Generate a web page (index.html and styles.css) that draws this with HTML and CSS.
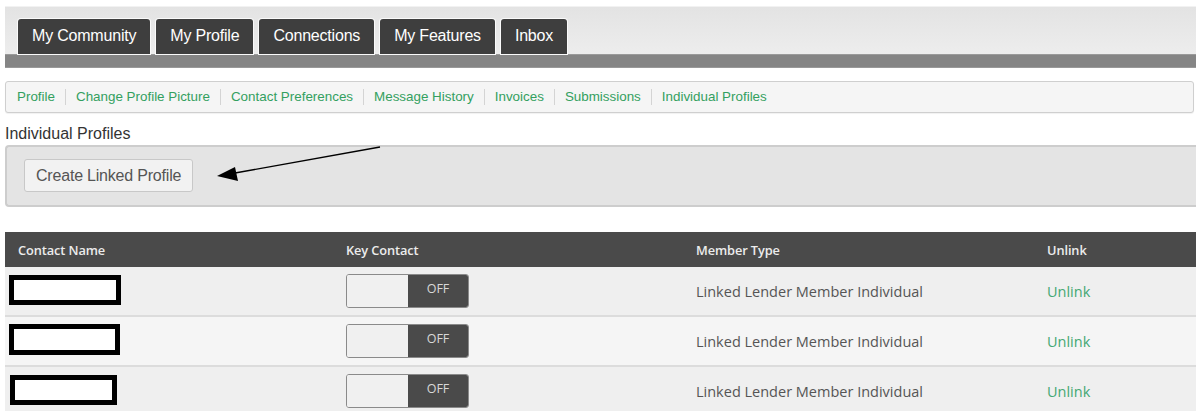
FILE: index.html
```html
<!DOCTYPE html>
<html lang="en">
<head>
<meta charset="utf-8">
<title>Individual Profiles</title>
<link rel="stylesheet" href="styles.css">
</head>
<body>
<div class="page">
  <div class="topnav">
    <ul class="tabs">
      <li class="tab">My Community</li>
      <li class="tab">My Profile</li>
      <li class="tab">Connections</li>
      <li class="tab">My Features</li>
      <li class="tab">Inbox</li>
    </ul>
    <div class="tabbar"></div>
  </div>

  <nav class="subnav">
    <a href="#">Profile</a>
    <a href="#">Change Profile Picture</a>
    <a href="#">Contact Preferences</a>
    <a href="#">Message History</a>
    <a href="#">Invoices</a>
    <a href="#">Submissions</a>
    <a href="#">Individual Profiles</a>
  </nav>

  <h2 class="heading">Individual Profiles</h2>

  <div class="panel">
    <button class="btn">Create Linked Profile</button>
    <svg class="arrow" width="180" height="40" viewBox="0 0 180 40">
      <line x1="165" y1="1" x2="20" y2="27" stroke="#000" stroke-width="1.4"/>
      <polygon points="2,30 20,21 23,35" fill="#000"/>
    </svg>
  </div>

  <div class="table">
    <div class="row head">
      <div class="cell">Contact Name</div>
      <div class="cell">Key Contact</div>
      <div class="cell">Member Type</div>
      <div class="cell">Unlink</div>
    </div>
    <div class="row odd">
      <div class="cell"><span class="redact r1"></span></div>
      <div class="cell"><span class="toggle"><span class="knob"></span><span class="state">OFF</span></span></div>
      <div class="cell">Linked Lender Member Individual</div>
      <div class="cell"><a href="#" class="unlink">Unlink</a></div>
    </div>
    <div class="row even">
      <div class="cell"><span class="redact r2"></span></div>
      <div class="cell"><span class="toggle"><span class="knob"></span><span class="state">OFF</span></span></div>
      <div class="cell">Linked Lender Member Individual</div>
      <div class="cell"><a href="#" class="unlink">Unlink</a></div>
    </div>
    <div class="row odd">
      <div class="cell"><span class="redact r3"></span></div>
      <div class="cell"><span class="toggle"><span class="knob"></span><span class="state">OFF</span></span></div>
      <div class="cell">Linked Lender Member Individual</div>
      <div class="cell"><a href="#" class="unlink">Unlink</a></div>
    </div>
  </div>
</div>
</body>
</html>
```

FILE: styles.css
```css
* { box-sizing: border-box; }

html, body {
  margin: 0;
  background: #fff;
  overflow: hidden;
}

body {
  font-family: "Liberation Sans", Arial, sans-serif;
  color: #333;
}

.page {
  padding: 6px 0 0 5px;
}

/* top navigation */
.topnav {
  background: linear-gradient(#e3e3e3, #f0f0f0);
  border-top: 1px solid #f2f2f2;
  padding-top: 12px;
}

.tabs {
  list-style: none;
  margin: 0;
  padding: 0 0 0 13px;
  display: flex;
  gap: 6px;
}

.tab {
  background: #3e3e3e;
  color: #fff;
  font-size: 16px;
  line-height: 34px;
  height: 35px;
  padding: 0 14px;
  border-radius: 3px 3px 0 0;
  box-shadow: 0 0 0 1px #fafafa;
  letter-spacing: -0.2px;
}

.tabbar {
  height: 14px;
  background: #858585;
  border-top: 1px solid #9a9a9a;
  border-bottom: 1px solid #999;
}

/* sub navigation */
.subnav {
  margin: 13px 2px 0 0;
  height: 32px;
  border: 1px solid #cfcfcf;
  border-radius: 3px;
  background: #f5f5f5;
  box-shadow: 0 1px 1px rgba(0, 0, 0, 0.06);
  display: flex;
  align-items: center;
  padding-left: 11px;
  font-size: 13.4px;
}

.subnav a {
  color: #33a05f;
  text-decoration: none;
  padding: 0 10px;
  border-left: 1px solid #d4d4d4;
  line-height: 16px;
}

.subnav a:first-child {
  border-left: none;
  padding-left: 0;
}

.heading {
  margin: 10px 0 0;
  font-size: 16px;
  font-weight: normal;
  line-height: 22px;
  color: #333;
}

/* action panel */
.panel {
  position: relative;
  height: 62px;
  background: #e4e4e4;
  border: 2px solid #cdcdcd;
  border-right: none;
  border-radius: 4px 0 0 4px;
  padding: 12px 0 0 17px;
}

.btn {
  font-family: "Liberation Sans", Arial, sans-serif;
  font-size: 16px;
  color: #555;
  background: #f2f2f2;
  border: 1px solid #c8c8c8;
  border-radius: 3px;
  height: 33px;
  padding: 0 11px;
  letter-spacing: -0.2px;
}

.arrow {
  position: absolute;
  left: 208px;
  top: -1px;
  overflow: visible;
}

/* linked profiles table */
.table {
  margin-top: 25px;
  font-family: "Open Sans", sans-serif;
}

.row {
  display: grid;
  grid-template-columns: 328px 350px 351px 1fr;
  align-items: center;
}

.row .cell {
  padding-left: 13px;
}

.head {
  background: #4a4a4a;
  color: #ececec;
  font-size: 12.8px;
  font-weight: 600;
  height: 35px;
  letter-spacing: -0.1px;
}

.odd, .even {
  font-size: 14.5px;
  color: #555;
  height: 50px;
  border-bottom: 2px solid #dcdcdc;
}

.odd { background: #efefef; }
.even { background: #f5f5f5; }

.odd .cell:first-child,
.even .cell:first-child {
  padding-left: 4px;
}

.redact {
  display: block;
  background: #fff;
  border: 5px solid #000;
  height: 30px;
  margin-top: -3px;
}

.r1 { width: 112px; }
.r2 { width: 111px; height: 31px; }
.r3 { width: 107px; margin-left: 1px; }

.toggle {
  display: flex;
  width: 123px;
  height: 34px;
  border: 1px solid #8a8a8a;
  border-radius: 3px;
  overflow: hidden;
  margin-top: -1px;
}

.knob {
  width: 61px;
  background: #f0f0f0;
}

.state {
  flex: 1;
  background: #4a4a4a;
  color: #d8d8d8;
  font-size: 12.5px;
  text-align: center;
  line-height: 28px;
}

.unlink {
  color: #44a873;
  text-decoration: none;
}
```
